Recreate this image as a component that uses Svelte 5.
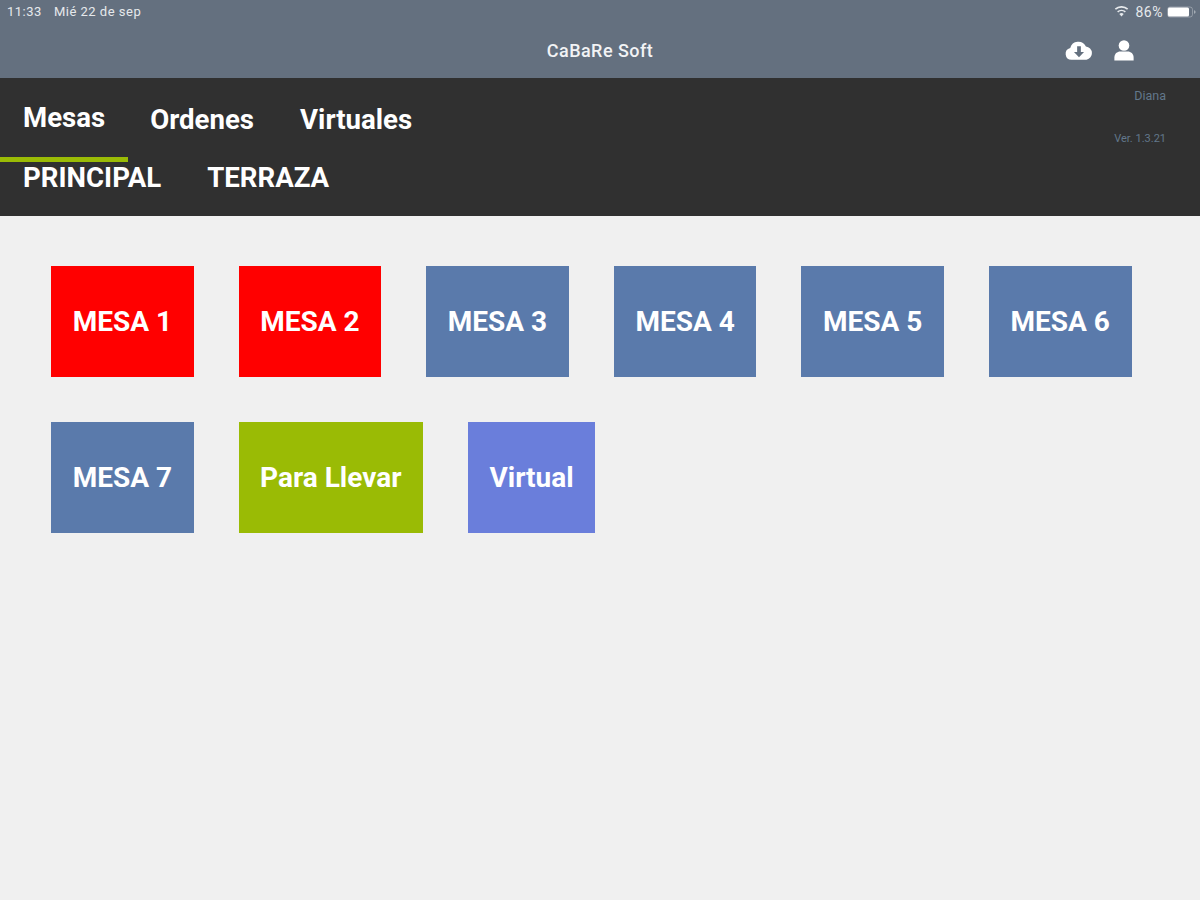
<script>
	const tabs = [
		{ label: 'Mesas', active: true },
		{ label: 'Ordenes' },
		{ label: 'Virtuales' }
	];
	const zones = ['PRINCIPAL', 'TERRAZA'];
	const tables = [
		{ label: 'MESA 1', kind: 'busy' },
		{ label: 'MESA 2', kind: 'busy' },
		{ label: 'MESA 3', kind: 'free' },
		{ label: 'MESA 4', kind: 'free' },
		{ label: 'MESA 5', kind: 'free' },
		{ label: 'MESA 6', kind: 'free' },
		{ label: 'MESA 7', kind: 'free' },
		{ label: 'Para Llevar', kind: 'togo' },
		{ label: 'Virtual', kind: 'virtual' }
	];
</script>

<div class="screen">
	<header class="top">
		<div class="status">
			<div class="clock">
				<span>11:33</span>
				<span>Mié 22 de sep</span>
			</div>
			<div class="battery">
				<svg class="wifi" viewBox="0 0 16 12" width="15" height="11" aria-hidden="true">
					<path d="M8 11.5 5.6 8.6a3.6 3.6 0 0 1 4.8 0Z" fill="currentColor" />
					<path d="M4.4 7.200a5.400 5.400 0 0 1 7.200 0l1.200-1.400a7.300 7.300 0 0 0-9.600 0Z" fill="currentColor" />
					<path d="M1.900 4.200a9 9 0 0 1 12.200 0l1.200-1.400a10.900 10.900 0 0 0-14.600 0Z" fill="currentColor" />
				</svg>
				<span class="level">86%</span>
				<svg viewBox="0 0 30 12" width="30" height="12" aria-hidden="true">
					<rect x="0.5" y="1" width="25" height="10" rx="2.5" fill="none" stroke="currentColor" stroke-opacity="0.35" />
					<rect x="1" y="1.500" width="21" height="9" rx="1.500" fill="#fff" />
					<path d="M27 4.200c1.200.3 1.600 1 1.600 1.800s-.4 1.500-1.600 1.800Z" fill="currentColor" fill-opacity="0.5" />
				</svg>
			</div>
		</div>
		<div class="title-row">
			<h1>CaBaRe Soft</h1>
			<div class="actions">
				<svg viewBox="0 0 30 22" width="28" height="21" aria-hidden="true">
					<path
						fill="#fff"
						fill-rule="evenodd"
						d="M7 21a6.500 6.500 0 0 1-1.400-12.800A9 9 0 0 1 22.400 6.600 7.300 7.300 0 0 1 23 21ZM13 6.500v6H9.600l5.400 5.600 5.400-5.600H17v-6Z"
					/>
				</svg>
				<svg viewBox="0 0 24 24" width="22" height="23" aria-hidden="true">
					<circle cx="12" cy="6.500" r="5.800" fill="#fff" />
					<path fill="#fff" d="M1.500 23v-3.500c0-4 3-6.500 6.500-6.500h8c3.500 0 6.500 2.500 6.500 6.500V23Z" />
				</svg>
			</div>
		</div>
	</header>

	<nav class="nav">
		<div class="meta">
			<span>Diana</span>
			<span>Ver. 1.3.21</span>
		</div>
		<div class="tabs">
			{#each tabs as tab}
				<button class="tab" class:active={tab.active}>{tab.label}</button>
			{/each}
		</div>
		<div class="zones">
			{#each zones as zone}
				<button class="zone">{zone}</button>
			{/each}
		</div>
	</nav>

	<main class="tables">
		{#each tables as table}
			<button class="table {table.kind}">{table.label}</button>
		{/each}
	</main>
</div>

<style>
	:global(body) {
		background: #f0f0f0;
		font-family: Roboto, "Liberation Sans", sans-serif;
	}

	.screen {
		height: 900px;
		overflow: hidden;
		background: #f0f0f0;
	}

	button {
		border: 0;
		background: none;
		color: #fff;
		font: inherit;
		cursor: pointer;
	}

	.top {
		height: 78px;
		background: #64707f;
		color: #fff;
	}

	.status {
		height: 23px;
		display: flex;
		justify-content: space-between;
		align-items: center;
		padding: 0 3px 0 7px;
		font-size: 13px;
		letter-spacing: 0.5px;
		color: #e6e9ec;
	}

	.clock {
		display: flex;
		gap: 12px;
	}

	.battery {
		display: flex;
		align-items: center;
		gap: 4px;
	}

	.level {
		font-size: 14px;
		margin-left: 3px;
	}

	.title-row {
		position: relative;
		height: 55px;
		display: flex;
		align-items: center;
		justify-content: center;
	}

	h1 {
		margin: 0;
		font-size: 18px;
		font-weight: 500;
		letter-spacing: 0.45px;
		color: #f2f3f5;
	}

	.actions {
		position: absolute;
		right: 65px;
		top: 16px;
		display: flex;
		align-items: center;
		gap: 20px;
	}

	.nav {
		position: relative;
		height: 138px;
		background: #303030;
	}

	.meta {
		position: absolute;
		right: 34px;
		top: 10px;
		display: flex;
		flex-direction: column;
		align-items: flex-end;
		gap: 29px;
		color: #62778b;
	}

	.meta span:first-child {
		font-size: 12.5px;
	}

	.meta span:last-child {
		font-size: 11px;
	}

	.tabs {
		display: flex;
		height: 84px;
	}

	.tab {
		height: 84px;
		padding: 4px 24px 0 22px;
		font-size: 27.6px;
		font-weight: 700;
		box-sizing: border-box;
		border-bottom: 5px solid transparent;
	}

	.tab.active {
		padding: 0 23px;
		border-bottom-color: #9abb05;
	}

	.zones {
		display: flex;
		margin-top: -4px;
	}

	.zone {
		padding: 0 23px;
		height: 38px;
		font-size: 27.6px;
		font-weight: 700;
	}

	.tables {
		display: flex;
		flex-wrap: wrap;
		gap: 45px;
		padding: 50px 51px;
	}

	.table {
		height: 111px;
		padding: 0 21.5px;
		font-size: 28px;
		font-weight: 700;
	}

	.busy,
	.free {
		width: 142.6px;
		padding: 0;
	}

	.busy {
		background: #ff0000;
	}

	.free {
		background: #5a7aab;
	}

	.togo {
		background: #9abb05;
	}

	.virtual {
		background: #6a7edb;
	}
</style>
